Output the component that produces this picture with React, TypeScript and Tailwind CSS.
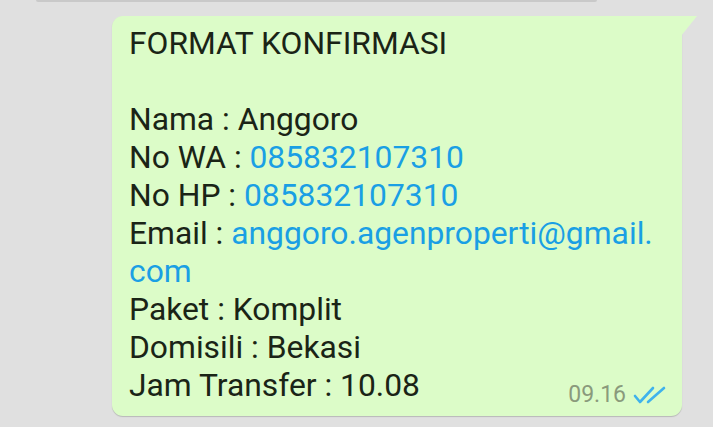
import React from 'react';

const lines: { label: string; value: React.ReactNode; link?: boolean }[] = [
  { label: 'Nama', value: 'Anggoro' },
  { label: 'No WA', value: '085832107310', link: true },
  { label: 'No HP', value: '085832107310', link: true },
  {
    label: 'Email',
    value: (
      <>
        anggoro.agenproperti@gmail.
        <br />
        com
      </>
    ),
    link: true,
  },
  { label: 'Paket', value: 'Komplit' },
  { label: 'Domisili', value: 'Bekasi' },
];

function DoubleCheck() {
  return (
    <svg width="34" height="18" viewBox="0 0 34 18" fill="none" stroke="#3fb2ec" strokeWidth={2.6} strokeLinecap="round" strokeLinejoin="round">
      <path d="M2 10l5 6L20 2" />
      <path d="M15 16L31 2" />
    </svg>
  );
}

export default function App() {
  return (
    <div className="w-[713px] h-[427px] overflow-hidden bg-[#e0e0e0] font-['Roboto',sans-serif]">
      {/* bottom edge of previous bubble */}
      <div className="ml-[36px] w-[561px] h-[2px] rounded-b bg-[#c9c9c9]" />

      <div className="relative ml-[112px] mt-[14px] w-[570px]">
        <div className="rounded-[11px] rounded-tr-none bg-[#dcfcc8] shadow-[0_1px_1px_rgba(0,0,0,0.18)] pl-[17px] pr-[14px] pt-[8px] pb-[12px] text-[31.8px] leading-[38px] text-[#1a2416]">
          <div>FORMAT KONFIRMASI</div>
          <div className="h-[38px]" />
          {lines.map((l) => (
            <div key={l.label}>
              {l.label} :{' '}
              <span className={l.link ? 'text-[#1a9fe4]' : ''}>{l.value}</span>
            </div>
          ))}
          <div className="flex items-end justify-between">
            <span>Jam Transfer : 10.08</span>
            <span className="flex items-center gap-[7px] text-[23px] leading-[26px] text-[#8a9a7c] mb-[-4px] mr-[1px]">
              09.16
              <DoubleCheck />
            </span>
          </div>
        </div>
        {/* tail */}
        <svg className="absolute top-0 right-[-16px]" width="17" height="30" viewBox="0 0 17 30">
          <path d="M0 0H16L0 20Z" fill="#dcfcc8" />
        </svg>
      </div>
    </div>
  );
}
